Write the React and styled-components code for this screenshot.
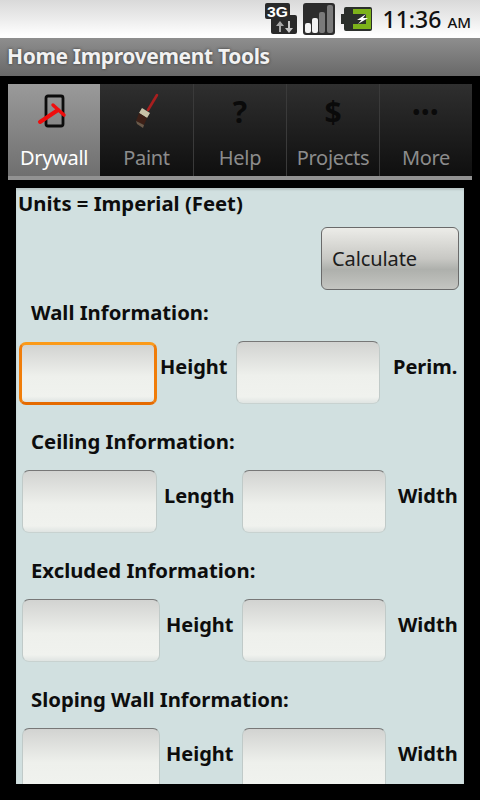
import React from 'react';
import styled, { createGlobalStyle } from 'styled-components';

const GlobalStyle = createGlobalStyle`
    html, body {
        margin: 0;
        padding: 0;
        background: #000;
    }
`;

const sections = [
    {
        title: 'Wall Information:',
        offset: 3,
        cols: '138px 79px 144px 1fr',
        labelA: 'Height',
        labelB: 'Perim.',
        padA: 3,
        padB: 13,
        focused: true,
    },
    {
        title: 'Ceiling Information:',
        offset: 6,
        cols: '135px 85px 144px 1fr',
        labelA: 'Length',
        labelB: 'Width',
        padA: 7,
        padB: 12,
    },
    {
        title: 'Excluded Information:',
        offset: 6,
        cols: '138px 82px 144px 1fr',
        labelA: 'Height',
        labelB: 'Width',
        padA: 6,
        padB: 12,
    },
    {
        title: 'Sloping Wall Information:',
        offset: 6,
        cols: '138px 82px 144px 1fr',
        labelA: 'Height',
        labelB: 'Width',
        padA: 6,
        padB: 12,
    },
];

function DrywallIcon() {
    return (
        <svg width="48" height="48" viewBox="0 0 48 48">
            <rect x="16" y="9" width="17" height="30" rx="2" fill="none" stroke="#0c0c0c" strokeWidth="2.8" />
            <path d="M10 35 L28 23" stroke="#f00d0d" strokeWidth="4" strokeLinecap="round" fill="none" />
            <path d="M23 18 L34 28" stroke="#f00d0d" strokeWidth="3.4" strokeLinecap="round" fill="none" />
        </svg>
    );
}

function BrushIcon() {
    return (
        <svg width="48" height="48" viewBox="0 0 48 48">
            <path d="M34 8 L25 23" stroke="#a81f1f" strokeWidth="2.6" strokeLinecap="round" fill="none" />
            <path d="M19 21 L27 26 L24 31 L16 26 Z" fill="#c9c3a8" />
            <path d="M16 26 L24 31 L21 38 L13 34 Z" fill="#3d2017" />
            <path d="M13 34 L21 38 L20 41 L14 37 Z" fill="#6b5a4a" />
        </svg>
    );
}

function ThreeGIcon() {
    return (
        <svg width="32" height="32" viewBox="0 0 32 32">
            <rect x="0" y="0" width="25" height="16" rx="2" fill="#2a2a2a" />
            <rect x="6" y="12" width="26" height="19" rx="2" fill="#2a2a2a" />
            <text x="2" y="13.5" fontFamily="Liberation Sans, sans-serif" fontWeight="700" fontSize="15" textLength="21" lengthAdjust="spacingAndGlyphs" fill="#fff">3G</text>
            <path d="M14 29 V23 H11 L15 18 L19 23 H16 V29 Z" fill="#a9a9a9" />
            <path d="M23 18 V25 H20 L24 30 L28 25 H25 V18 Z" fill="#c8c8c8" />
        </svg>
    );
}

function SignalIcon() {
    return (
        <svg width="32" height="32" viewBox="0 0 32 32">
            <rect x="0" y="0" width="32" height="32" rx="3" fill="#2c2c2c" />
            <rect x="2" y="20" width="6" height="10" rx="2" fill="#f4f4f4" />
            <rect x="9" y="15" width="6" height="15" rx="2" fill="#f4f4f4" />
            <rect x="16" y="9" width="6" height="21" rx="2" fill="#7a7a7a" />
            <rect x="24" y="2" width="6" height="28" rx="2" fill="#7a7a7a" />
        </svg>
    );
}

function BatteryIcon() {
    return (
        <svg width="32" height="24" viewBox="0 0 32 24">
            <path d="M5 0 H29 a2 2 0 0 1 2 2 V22 a2 2 0 0 1 -2 2 H5 a2 2 0 0 1 -2 -2 V17 H0 V7 H3 V2 a2 2 0 0 1 2 -2Z" fill="#2b2f2b" />
            <path d="M12 2 H30 V22 H12 V17 H25 V7 H12 Z" fill="#7db21a" />
            <path d="M25 7 L16 13 H20.5 L17 17 L27 11 H22 Z" fill="#fff" />
        </svg>
    );
}

const App = () => {
    const tabs = [
        { label: 'Drywall', icon: <DrywallIcon />, active: true },
        { label: 'Paint', icon: <BrushIcon /> },
        { label: 'Help', icon: <TabGlyph $size={30}>?</TabGlyph> },
        { label: 'Projects', icon: <TabGlyph $size={30}>$</TabGlyph> },
        { label: 'More', icon: <TabGlyph $size={20} $spacing={1.5}>•••</TabGlyph> },
    ];

    return (
        <Screen>
            <GlobalStyle />
            <StatusBar>
                <ThreeGIcon />
                <SignalIcon />
                <BatteryIcon />
                <Clock>11:36<small>AM</small></Clock>
            </StatusBar>
            <TitleBar>Home Improvement Tools</TitleBar>
            <TabBar>
                {tabs.map((tab) => (
                    <Tab key={tab.label} $active={tab.active}>
                        <TabIcon>{tab.icon}</TabIcon>
                        <TabLabel $active={tab.active}>{tab.label}</TabLabel>
                    </Tab>
                ))}
            </TabBar>
            <Panel>
                <Units>Units = Imperial (Feet)</Units>
                <ButtonRow>
                    <CalcButton>Calculate</CalcButton>
                </ButtonRow>
                {sections.map((s) => (
                    <Section key={s.title}>
                        <SectionTitle>{s.title}</SectionTitle>
                        <InputRow $cols={s.cols} $offset={s.offset}>
                            <Field $focused={s.focused} />
                            <FieldLabel $pad={s.padA}>{s.labelA}</FieldLabel>
                            <Field />
                            <FieldLabel $pad={s.padB}>{s.labelB}</FieldLabel>
                        </InputRow>
                    </Section>
                ))}
            </Panel>
        </Screen>
    );
};

const Screen = styled.div`
    width: 480px;
    height: 800px;
    display: flex;
    flex-direction: column;
    overflow: hidden;
    background: #000;
    font-family: "Noto Sans", "Open Sans", sans-serif;
`;

const StatusBar = styled.header`
    height: 38px;
    box-sizing: border-box;
    display: flex;
    align-items: center;
    justify-content: flex-end;
    gap: 6px;
    padding-right: 9px;
    background: linear-gradient(#d9d9d9, #ececec 50%, #fefefe 92%);
`;

const Clock = styled.span`
    margin-left: 4px;
    font-size: 23px;
    font-weight: 500;
    color: #111;

    & small {
        margin-left: 6px;
        font-size: 15px;
    }
`;

const TitleBar = styled.div`
    height: 38px;
    box-sizing: border-box;
    padding: 0 7px;
    line-height: 37px;
    font-size: 21px;
    font-weight: 700;
    letter-spacing: -0.36px;
    color: #f2f2f2;
    text-shadow: 0 0 3px #333;
    background: linear-gradient(#8e8e8e, #686868);
`;

const TabBar = styled.nav`
    height: 96px;
    flex: none;
    box-sizing: border-box;
    margin: 8px 8px 0;
    display: grid;
    grid-template-columns: 92px repeat(4, 1fr);
    border-bottom: 4px solid #929292;
    background: linear-gradient(#2f2f2f, #0f0f0f);
`;

const Tab = styled.div`
    display: flex;
    flex-direction: column;
    align-items: center;
    border-left: ${(p) => (p.$active ? 'none' : '1px solid #3a3a3a')};
    background: ${(p) => (p.$active ? 'linear-gradient(#9a9a9a, #6f6f6f)' : 'transparent')};

    &:nth-child(2) {
        border-left: none;
    }
`;

const TabIcon = styled.div`
    height: 48px;
    margin-top: 3px;
    display: flex;
    align-items: center;
    justify-content: center;
`;

const TabGlyph = styled.span`
    font-size: ${(p) => p.$size}px;
    font-weight: 700;
    color: #0a0a0a;
    letter-spacing: ${(p) => p.$spacing || 0}px;
`;

const TabLabel = styled.span`
    font-size: 20px;
    letter-spacing: -0.3px;
    line-height: 30px;
    margin-top: 8px;
    color: ${(p) => (p.$active ? '#fff' : '#8c8c8c')};
`;

const Panel = styled.main`
    flex: none;
    height: 596px;
    margin: 8px 16px 0;
    overflow: hidden;
    background: #d1e0e0;
    box-shadow: inset 0 2px 2px rgba(0, 0, 0, 0.12);
    color: #0d0d0d;
`;

const Units = styled.div`
    height: 32px;
    padding-left: 2px;
    line-height: 30px;
    font-size: 20.3px;
    font-weight: 700;
`;

const ButtonRow = styled.div`
    display: flex;
    justify-content: flex-end;
    margin-top: 7px;
    padding-right: 5px;
    margin-bottom: 4px;
`;

const CalcButton = styled.button`
    width: 138px;
    height: 63px;
    box-sizing: border-box;
    padding: 0 0 0 10px;
    text-align: left;
    font-family: inherit;
    font-size: 20px;
    letter-spacing: -0.1px;
    color: #1c1c1c;
    border: 1px solid #6a6a6a;
    border-radius: 6px;
    background: linear-gradient(#ecece8, #c8c8c4 50%, #aeb0ac 68%, #c4c5c1);
`;

const Section = styled.section`
    height: 129px;
`;

const SectionTitle = styled.h2`
    margin: 0 0 9px;
    padding-left: 15px;
    height: 38px;
    line-height: 37px;
    font-size: 20.3px;
    font-weight: 700;
`;

const InputRow = styled.div`
    display: grid;
    grid-template-columns: ${(p) => p.$cols};
    align-items: start;
    padding-left: ${(p) => p.$offset}px;
`;

const Field = styled.div`
    height: 63px;
    box-sizing: border-box;
    margin-top: ${(p) => (p.$focused ? 1 : 0)}px;
    border-radius: 7px;
    border: ${(p) => (p.$focused ? '3px solid #f07d0a' : '1px solid #c0cac8')};
    border-top-color: ${(p) => (p.$focused ? '#fb9a1a' : '#777')};
    border-bottom-color: ${(p) => (p.$focused ? '#e56a00' : '#c8d2d0')};
    background: linear-gradient(#d2d3d1, #eef0ec 55%, #f0f2ee 90%, #dfe4e2);
`;

const FieldLabel = styled.span`
    padding-left: ${(p) => p.$pad}px;
    line-height: 52px;
    font-size: 20px;
    font-weight: 700;
    white-space: nowrap;
`;

export default App;
